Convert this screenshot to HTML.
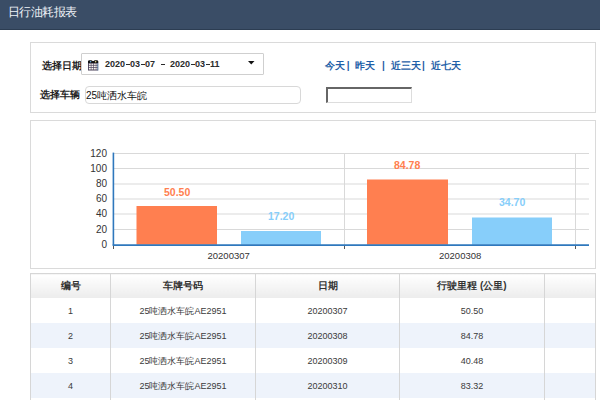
<!DOCTYPE html>
<html><head><meta charset="utf-8">
<style>
*{margin:0;padding:0;box-sizing:border-box}
html,body{width:600px;height:400px;overflow:hidden;background:#fff;font-family:"Liberation Sans",sans-serif;color:#333}
.a{position:absolute;white-space:nowrap}
#hdr{left:0;top:0;width:600px;height:30px;background:#3a4d66;border-bottom:1px solid #2c3d52}
#title{left:8px;top:4px;font-size:11.5px;letter-spacing:-0.55px;line-height:16px;color:#eef2f7}
.panel{position:absolute;left:30px;width:566px;border:1px solid #dadada;background:#fff}
.lbl{font-size:10px;line-height:12px;font-weight:bold;color:#1e1e1e}
#datebox{left:81px;top:53px;width:183px;height:22px;border:1px solid #cfcfcf;border-radius:1px;background:#fff}
.dt{font-size:9px;line-height:10px;font-weight:bold;color:#2a2a2a}
.ds{display:inline-block;width:5px;height:6px;position:relative}.ds:after{content:"";position:absolute;left:0.5px;right:-0.3px;top:3px;height:1.2px;background:#2a2a2a}.sp{display:inline-block;width:5px}
#vbox{left:85px;top:86px;width:216px;height:18px;border:1px solid #d8d8d8;border-radius:4px;background:#fff}
.lnk{font-size:10px;line-height:12px;color:#1f5fa8;font-weight:bold}
#inset{left:326px;top:87px;width:86px;height:16px;border-top:2px solid #666;border-left:2px solid #666;border-right:1px solid #ddd;border-bottom:1px solid #ddd;background:#fff}
.yl{font-size:10px;line-height:10px;color:#333;text-align:right;width:30px}
.xl{font-size:9.5px;line-height:10px;color:#333}
.val{font-size:10.5px;line-height:11px;font-weight:bold}
table{position:absolute;left:30px;top:273px;width:566px;border-collapse:collapse;border:1px solid #d6d6d6}
td,th{height:25px;text-align:center;border-right:1px solid #d6d6d6;padding:0}
th{height:24px;font-size:10px;font-weight:bold;color:#333;background:linear-gradient(#fff,#ececec)}
td{font-size:9px;color:#3a3a3a;padding-top:2px}
tr.o td{background:#eef3fb}
</style></head><body>
<div id="hdr" class="a"></div>
<div id="title" class="a">日行油耗报表</div>

<div class="panel" style="top:42px;height:71px"></div>
<div class="a lbl" style="left:41.6px;top:60px">选择日期</div>
<div id="datebox" class="a"></div>
<svg class="a" style="left:88px;top:59.5px" width="11" height="11" viewBox="0 0 11 11">
 <rect x="0" y="1" width="10.2" height="9.5" fill="#4a4058"/>
 <path d="M0 1.5Q0 0.3 1.5 0.3H3.2Q4.2 0.3 4.6 1.2H5.6Q6 0.3 7 0.3H8.7Q10.2 0.3 10.2 1.5V3H0z" fill="#101010"/>
 <circle cx="2.6" cy="1.8" r="0.8" fill="#6ab0e8"/><circle cx="7.6" cy="1.8" r="0.8" fill="#f0e090"/>
 <g fill="#f8f6f0">
  <rect x="0.9" y="3.6" width="1.9" height="1.3"/><rect x="3.4" y="3.6" width="1.9" height="1.3"/><rect x="5.9" y="3.6" width="1.9" height="1.3"/><rect x="8.3" y="3.6" width="1.2" height="1.3"/>
  <rect x="0.9" y="5.6" width="1.9" height="1.5"/><rect x="3.4" y="5.6" width="1.9" height="1.5"/><rect x="5.9" y="5.6" width="1.9" height="1.5"/><rect x="8.3" y="5.6" width="1.2" height="1.5"/>
  <rect x="0.9" y="7.8" width="1.9" height="1.7"/><rect x="3.4" y="7.8" width="1.9" height="1.7"/><rect x="5.9" y="7.8" width="1.9" height="1.7"/><rect x="8.3" y="7.8" width="1.2" height="1.7"/>
 </g>
 <rect x="9.6" y="3" width="0.6" height="7.5" fill="#5a9ad0"/>
</svg>
<div class="a dt" style="left:105px;top:59px">2020<i class="ds"></i>03<i class="ds"></i>07<i class="sp"></i><i class="ds"></i><i class="sp"></i>2020<i class="ds"></i>03<i class="ds"></i>11</div>
<svg class="a" style="left:248px;top:60.5px" width="7" height="4"><path d="M0 0h6.5L3.25 3.6z" fill="#111"/></svg>

<div class="a lbl" style="left:40px;top:89px">选择车辆</div>
<div id="vbox" class="a"></div>
<div class="a" style="left:86px;top:90.3px;font-size:10px;line-height:12px;color:#111">25吨洒水车皖</div>

<div class="a lnk" style="left:325px;top:60px">今天</div><div class="a lnk" style="left:346.8px;top:60px">|</div>
<div class="a lnk" style="left:355px;top:60px">昨天</div><div class="a lnk" style="left:382px;top:60px">|</div>
<div class="a lnk" style="left:391px;top:60px">近三天</div><div class="a lnk" style="left:422px;top:60px">|</div>
<div class="a lnk" style="left:430.5px;top:60px">近七天</div>
<div id="inset" class="a"></div>

<div class="panel" style="top:120px;height:149px"></div>
<!-- chart -->
<svg class="a" style="left:0;top:0" width="600" height="400">
 <g stroke="#d9d9d9" stroke-width="1">
  <path d="M113 153.5H589M113 168.5H589M113 184H589M113 199H589M113 214H589M113 229.5H589"/>
  <path d="M344.5 153V245M575.5 153V245"/>
 </g>
 <g stroke="#555" stroke-width="1">
  <path d="M113.5 245V249M344.5 245V249M575.5 245V249"/>
 </g>
 <rect x="136.5" y="206" width="80.5" height="38.7" fill="#ff7f50"/>
 <rect x="241" y="231" width="80" height="13.7" fill="#87cefa"/>
 <rect x="367" y="179.5" width="81" height="65.2" fill="#ff7f50"/>
 <rect x="472" y="217.5" width="80" height="27.2" fill="#87cefa"/>
 <g stroke="#2f78bd" stroke-width="1.6">
  <path d="M113.4 152.6V245.5"/>
  <path d="M112.7 245.1H589"/>
 </g>
</svg>
<div class="a yl" style="left:77px;top:149px">120</div>
<div class="a yl" style="left:77px;top:164px">100</div>
<div class="a yl" style="left:77px;top:179px">80</div>
<div class="a yl" style="left:77px;top:194.25px">60</div>
<div class="a yl" style="left:77px;top:209.25px">40</div>
<div class="a yl" style="left:77px;top:224.5px">20</div>
<div class="a yl" style="left:77px;top:239.5px">0</div>
<div class="a xl" style="left:207.5px;top:251px">20200307</div>
<div class="a xl" style="left:439px;top:251px">20200308</div>
<div class="a val" style="left:164px;top:186.5px;color:#ff7f50">50.50</div>
<div class="a val" style="left:268px;top:210.5px;color:#87cefa">17.20</div>
<div class="a val" style="left:394px;top:159.5px;color:#ff7f50">84.78</div>
<div class="a val" style="left:499px;top:197px;color:#87cefa">34.70</div>

<table>
<colgroup><col style="width:80px"><col style="width:145px"><col style="width:144px"><col style="width:145px"><col></colgroup>
<tr><th>编号</th><th>车牌号码</th><th>日期</th><th>行驶里程 (公里)</th><th></th></tr>
<tr><td>1</td><td>25吨洒水车皖AE2951</td><td>20200307</td><td>50.50</td><td></td></tr>
<tr class="o"><td>2</td><td>25吨洒水车皖AE2951</td><td>20200308</td><td>84.78</td><td></td></tr>
<tr><td>3</td><td>25吨洒水车皖AE2951</td><td>20200309</td><td>40.48</td><td></td></tr>
<tr class="o"><td>4</td><td>25吨洒水车皖AE2951</td><td>20200310</td><td>83.32</td><td></td></tr>
<tr><td>5</td><td>25吨洒水车皖AE2951</td><td>20200311</td><td>0.00</td><td></td></tr>
</table>
</body></html>
